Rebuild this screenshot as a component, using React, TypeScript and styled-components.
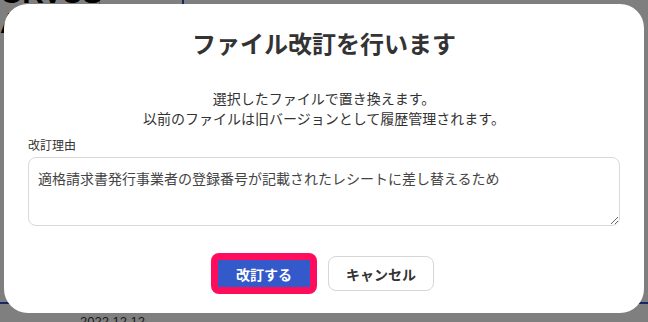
import { createGlobalStyle } from 'styled-components';
import styled from 'styled-components';

const GlobalStyle = createGlobalStyle`
  html, body {
    margin: 0;
    padding: 0;
    height: 100%;
  }
  body {
    font-family: 'Noto Sans CJK JP', 'Noto Sans', sans-serif;
    color: #333;
  }
  * { box-sizing: border-box; }
`;

const App = () => {
  return (
    <>
      <GlobalStyle />
      <Page>
        <TopRow>
          <LogoCell>
            <Logo>ORVUS</Logo>
            <Logo>ARCHIVE</Logo>
          </LogoCell>
          <Column />
          <Column $accent />
        </TopRow>
        <Spacer />
        <BottomRow>
          <DateText>2022.12.12</DateText>
        </BottomRow>
      </Page>
      <Overlay>
        <Modal>
          <Title>ファイル改訂を行います</Title>
          <Description>
            選択したファイルで置き換えます。
            <br />
            以前のファイルは旧バージョンとして履歴管理されます。
          </Description>
          <Field>
            <Label htmlFor="reason">改訂理由</Label>
            <TextArea
              id="reason"
              defaultValue="適格請求書発行事業者の登録番号が記載されたレシートに差し替えるため"
            />
          </Field>
          <Actions>
            <PrimaryButton>改訂する</PrimaryButton>
            <SecondaryButton>キャンセル</SecondaryButton>
          </Actions>
        </Modal>
      </Overlay>
    </>
  );
};

export default App;

const Page = styled.div`
  height: 322px;
  background: #fff;
  display: flex;
  flex-direction: column;
  overflow: hidden;
`;

const TopRow = styled.div`
  display: flex;
  height: 60px;
`;

const LogoCell = styled.div`
  width: 100px;
  border-right: 1px solid #bbb;
  margin-top: -22px;
  font-family: 'Liberation Sans', sans-serif;
`;

const Logo = styled.div`
  font-size: 30px;
  font-weight: 700;
  line-height: 30px;
  color: #000;
  letter-spacing: -1px;
`;

const Column = styled.div<{ $accent?: boolean }>`
  width: 42px;
  border-right: 2px solid ${({ $accent }) => ($accent ? '#2f4fc8' : 'transparent')};
`;

const Spacer = styled.div`
  flex: 1;
`;

const BottomRow = styled.div`
  border-top: 2px solid #2f4fc8;
  height: 20px;
  padding-left: 80px;
`;

const DateText = styled.div`
  margin-top: 10px;
  font-family: 'Liberation Sans', sans-serif;
  font-size: 13px;
  color: #333;
`;

const Overlay = styled.div`
  position: fixed;
  inset: 0;
  background: rgba(0, 0, 0, 0.5);
  display: flex;
  align-items: flex-start;
  justify-content: center;
  padding-top: 4px;
`;

const Modal = styled.div`
  width: 640px;
  background: #fff;
  border-radius: 24px;
  padding: 23px 24px 22px;
  display: flex;
  flex-direction: column;
`;

const Title = styled.h2`
  margin: 0;
  font-size: 24px;
  line-height: 32px;
  font-weight: 700;
  text-align: center;
  color: #333;
`;

const Description = styled.p`
  margin: 30px 0 0;
  font-size: 14px;
  line-height: 19.5px;
  text-align: center;
  color: #333;
`;

const Field = styled.div`
  margin-top: 8px;
  display: flex;
  flex-direction: column;
`;

const Label = styled.label`
  font-size: 12px;
  line-height: 18px;
  color: #333;
  margin-bottom: 3px;
`;

const TextArea = styled.textarea`
  width: 100%;
  height: 69px;
  padding: 10px 9px;
  font-family: 'Noto Sans CJK JP', 'Noto Sans', sans-serif;
  font-size: 14px;
  line-height: 21px;
  color: #444;
  border: 1px solid #d9d9d9;
  border-radius: 8px;
  outline: none;
`;

const Actions = styled.div`
  margin-top: 30px;
  display: flex;
  justify-content: center;
  gap: 14px;
`;

const BaseButton = styled.button`
  height: 35px;
  padding: 0 17px;
  font-family: 'Noto Sans CJK JP', 'Noto Sans', sans-serif;
  font-size: 14px;
  font-weight: 700;
  cursor: pointer;
`;

const PrimaryButton = styled(BaseButton)`
  width: 100px;
  background: #3459ca;
  color: #fff;
  border: none;
  border-radius: 5px;
  outline: 7px solid #fd0d5c;
  outline-offset: -4px;
`;

const SecondaryButton = styled(BaseButton)`
  background: #fff;
  color: #333;
  border: 1px solid #d6d6d6;
  border-radius: 8px;
`;
